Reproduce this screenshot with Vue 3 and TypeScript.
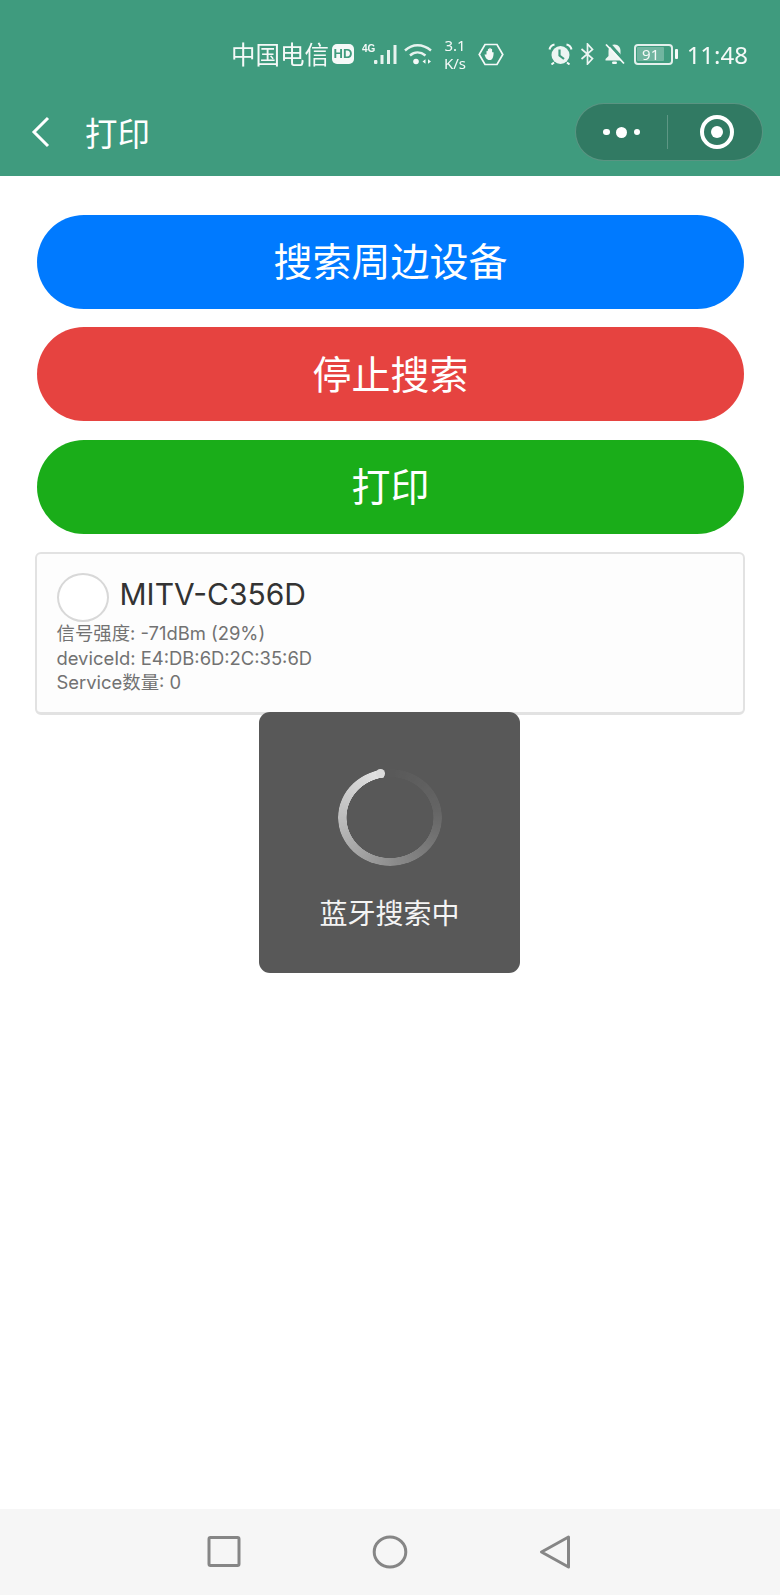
<script setup lang="ts">
const buttons: { label: string; tone: string }[] = [
  { label: '搜索周边设备', tone: 'blue' },
  { label: '停止搜索', tone: 'red' },
  { label: '打印', tone: 'green' },
]
</script>

<template>
  <div class="screen">
    <header class="head">
      <div class="status">
        <span class="carrier">中国电信</span>
        <span class="hd">HD</span>
        <span class="signal">
          <span class="tiny">4G</span>
          <svg width="23" height="21" viewBox="0 0 23 21"><g fill="#fff" fill-opacity=".92"><rect x="0" y="16" width="3.400" height="4" rx="1"/><rect x="6.500" y="11" width="3" height="9"/><rect x="13" y="6" width="3" height="14"/><rect x="19.500" y="1" width="3" height="19"/></g></svg>
        </span>
        <svg class="wifi" width="28" height="22" viewBox="0 0 28 22" fill="none" stroke="#fff" stroke-opacity=".92" stroke-width="2.400"><path d="M1 7.500C8.500 0.500 18.500 0.500 27 7.500"/><path d="M6 12.500C10.500 8.500 16.500 8.500 21.500 12.500"/><circle cx="12" cy="18.500" r="2.800" fill="#fff" stroke="none"/><path d="M18.500 18.500l3-2.200v4.400zM27 18.500l-3-2.200v4.400z" fill="#fff" stroke="none"/></svg>
        <span class="speed"><span>3.1</span><span>K/s</span></span>
        <svg class="hex" width="26" height="23" viewBox="0 0 26 23" fill="none" stroke="#fff" stroke-width="1.700"><path d="M7 1.500h12L24.800 11.500 19 21.500H7L1.200 11.500z"/><path d="M8.500 11.500V8.500c0-1 1.400-1 1.400 0V6.500c0-1 1.400-1 1.400 0V5.500c0-1 1.400-1 1.400 0v1c0-1 1.400-1 1.400 0v3.200c0-.8 1.500-.8 1.500 0 0 3.500-.800 7.300-4 7.300-3 0-4-2.300-5.100-5.500z" fill="#fff" stroke="none"/></svg>
        <span class="spring"></span>
        <svg width="25" height="22" viewBox="0 0 25 22"><circle cx="12.500" cy="12" r="9" fill="#fff" fill-opacity=".95"/><path d="M11.500 6.500V12.500l4.500 3.500" fill="none" stroke="#3f9b7e" stroke-width="2.200"/><path d="M1.500 6.500C2 3.500 4 2 6.500 1.500M23.500 6.500C23 3.500 21 2 18.500 1.500M6 19.500l-2.500 2M19 19.500l2.500 2" fill="none" stroke="#fff" stroke-width="2"/></svg>
        <svg class="bt" width="15" height="22" viewBox="0 0 15 22" fill="none" stroke="#fff" stroke-width="1.700" stroke-opacity=".95"><path d="M1.500 6l11 9.500-5 5.500V1l5 5.500L1.500 16"/></svg>
        <svg class="bell" width="21" height="22" viewBox="0 0 21 22"><path d="M10.500 1.500c-4 0-6 3-6 6.500v5L1.500 16v1.500h18V16l-3-3V8c0-3.500-2-6.500-6-6.500z" fill="#fff" fill-opacity=".95"/><rect x="8" y="18.500" width="5" height="2.500" rx="1.200" fill="#fff"/><path d="M5 .5l16 18" stroke="#3f9b7e" stroke-width="3"/><path d="M2 1.500l18 19" stroke="#fff" stroke-width="1.800"/></svg>
        <span class="battery"><span class="level"></span><span class="digits">91</span></span>
        <span class="cap"></span>
        <span class="time">11:48</span>
      </div>
      <div class="nav">
        <svg class="back" width="20" height="32" viewBox="0 0 20 32" fill="none" stroke="#fff" stroke-width="3"><path d="M17 2L3 16l14 14"/></svg>
        <span class="title">打印</span>
        <div class="capsule">
          <div class="dots"><i></i><i class="big"></i><i></i></div>
          <span class="rule"></span>
          <div class="target"><i></i></div>
        </div>
      </div>
    </header>

    <main class="page">
      <button v-for="b in buttons" :key="b.label" class="btn" :class="b.tone">{{ b.label }}</button>
      <section class="card">
        <div class="top">
          <span class="avatar"></span>
          <span class="name">MITV-C356D</span>
        </div>
        <p>信号强度: -71dBm (29%)</p>
        <p>deviceId: E4:DB:6D:2C:35:6D</p>
        <p>Service数量: 0</p>
      </section>
      <div class="toast">
        <div class="spinner"><span class="ring"></span><span class="tip"></span></div>
        <span class="msg">蓝牙搜索中</span>
      </div>
    </main>

    <footer class="bar">
      <svg width="36" height="34" viewBox="0 0 36 34" fill="none" stroke="#868686" stroke-width="3" stroke-linejoin="round"><rect x="3" y="2.500" width="30" height="28" rx="1.500"/></svg>
      <svg width="36" height="36" viewBox="0 0 36 36" fill="none" stroke="#868686" stroke-width="3"><ellipse cx="18" cy="18" rx="15.800" ry="15"/></svg>
      <svg width="32" height="36" viewBox="0 0 32 36" fill="none" stroke="#868686" stroke-width="3" stroke-linejoin="round"><path d="M29.500 3L2.500 18l27 15z"/></svg>
    </footer>
  </div>
</template>

<style>
html, body { margin: 0; background: #fff; }
</style>

<style scoped>
.screen {
  width: 780px;
  height: 1595px;
  display: flex;
  flex-direction: column;
  position: relative;
  overflow: hidden;
  font-family: "Noto Sans", "Noto Sans CJK SC", sans-serif;
  background: #fff;
}
.head { height: 176px; background: #3f9b7e; color: #fff; display: flex; flex-direction: column; flex: none; }
.status { height: 60px; margin-top: 24px; display: flex; align-items: center; padding-left: 231px; padding-right: 32px; opacity: .95; }
.carrier { font-size: 24.500px; position: relative; top: -1px; }
.hd { width: 22px; height: 20px; margin-left: 3px; border-radius: 5px; background: #fff; color: #3f9b7e; font: 700 13px/20px "Liberation Sans", sans-serif; text-align: center; }
.signal { display: flex; align-items: flex-end; position: relative; margin-left: 8px; width: 35px; height: 21px; justify-content: flex-end; }
.tiny { position: absolute; left: 0; top: -1px; font: 700 10px/11px "Liberation Sans", sans-serif; }
.wifi { margin-left: 7px; }
.speed { display: flex; flex-direction: column; align-items: center; width: 24px; font-size: 15px; line-height: 18px; margin-left: 11px; }
.hex { margin-left: 11px; }
.spring { flex: 1; }
.bt { margin-left: 7px; }
.bell { margin-left: 9px; }
.battery { margin-left: 9px; width: 39px; height: 21px; box-sizing: border-box; border: 2px solid rgba(255,255,255,.9); border-radius: 4px; padding: 1.500px; display: flex; position: relative; }
.level { width: 27px; background: rgba(255,255,255,.28); border-radius: 1px; }
.digits { position: absolute; left: 0; width: 30px; top: 0; text-align: center; color: #fff; font-size: 15px; line-height: 17px; }
.cap { width: 3px; height: 10px; background: #fff; margin-left: 2px; border-radius: 1px; }
.time { font-size: 24px; margin-left: 9px; }
.nav { flex: 1; display: flex; align-items: center; padding-left: 31px; padding-right: 17px; padding-top: 4px; }
.back { flex: none; }
.title { font-size: 32.500px; margin-left: 34px; }
.capsule { margin-left: auto; width: 188px; height: 58px; box-sizing: border-box; border: 1px solid rgba(255,255,255,.2); background: #317a63; border-radius: 29px; display: flex; align-items: center; }
.dots { width: 91px; display: flex; align-items: center; justify-content: center; gap: 6.500px; }
.dots i { width: 6.500px; height: 6.500px; border-radius: 50%; background: #fff; }
.dots i.big { width: 11px; height: 11px; }
.rule { width: 1px; height: 34px; background: rgba(255,255,255,.22); }
.target { flex: 1; display: flex; align-items: center; justify-content: center; padding-left: 4px; }
.target i { width: 34px; height: 34px; box-sizing: border-box; border: 4.500px solid #fff; border-radius: 50%; display: flex; align-items: center; justify-content: center; }
.target i::after { content: ""; width: 12px; height: 12px; border-radius: 50%; background: #fff; }

.page { flex: 1; position: relative; padding: 38.700px 35px 0 36px; display: flex; flex-direction: column; }
.btn {
  height: 94px;
  margin: 0 1px 18.500px;
  border: 0;
  border-radius: 47px;
  color: #fff;
  font-family: inherit;
  font-size: 39px;
  line-height: 92px;
  padding: 0 0 1px;
}
.blue { background: #007aff; }
.red { background: #e64340; }
.green { background: #1aad19; }
.card {
  box-sizing: border-box;
  height: 163px;
  margin-left: -1.500px;
  border: 2px solid #e2e2e2;
  border-bottom-width: 3px;
  border-radius: 6px;
  background: #fdfdfd;
  padding: 18px 20px 0;
  color: #727272;
  font-family: Inter, "Noto Sans CJK SC", sans-serif;
}
.top { display: flex; align-items: center; height: 50px; margin-bottom: -1px; }
.avatar { width: 52px; height: 49px; box-sizing: border-box; border: 2px solid #d8d8d8; border-radius: 50%; background: #fff; }
.name { font-size: 30px; line-height: 45px; align-self: flex-start; color: #333; margin-left: 11px; }
.card p { margin: 0; font-size: 18.400px; line-height: 24.500px; }
.toast {
  position: absolute;
  left: 259px;
  top: 536px;
  width: 261px;
  height: 261px;
  background: #585858;
  border-radius: 11px;
  display: flex;
  flex-direction: column;
  align-items: center;
  color: #f4f4f4;
}
.spinner { width: 104px; height: 97px; margin-top: 57px; position: relative; }
.ring {
  position: absolute;
  inset: 0;
  border-radius: 50%;
  background: conic-gradient(from -9deg, rgba(255,255,255,0) 0deg, rgba(255,255,255,.08) 90deg, rgba(255,255,255,.3) 180deg, rgba(255,255,255,.58) 270deg, rgba(255,255,255,.85) 360deg);
  -webkit-mask: radial-gradient(ellipse closest-side, transparent 83%, #000 84%);
  mask: radial-gradient(ellipse closest-side, transparent 83%, #000 84%);
}
.tip { position: absolute; left: 38.500px; top: 0; width: 8.500px; height: 8.500px; border-radius: 50%; background: #dcdcdc; }
.msg { font-size: 28px; margin-top: 27px; line-height: 40px; }

.bar {
  height: 86px;
  flex: none;
  background: #f6f6f6;
  display: flex;
  align-items: center;
  padding: 0 0 0 205.500px;
  gap: 130.500px;
  box-sizing: border-box;
}
</style>
